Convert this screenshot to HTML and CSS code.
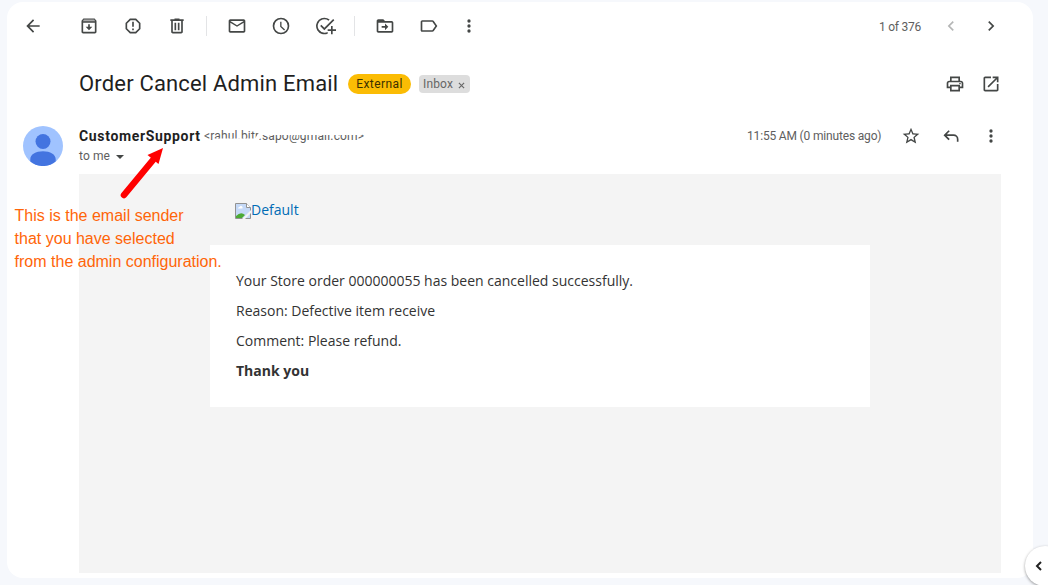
FILE: index.html
```html
<!DOCTYPE html>
<html lang="en">
<head>
<meta charset="utf-8">
<title>Order Cancel Admin Email</title>
<link rel="stylesheet" href="styles.css">
</head>
<body>
<main class="panel">
  <header class="toolbar">
    <svg class="icon back" viewBox="0 0 24 24"><path d="M20 11H7.8l5.6-5.6L12 4l-8 8 8 8 1.4-1.4L7.8 13H20z"/></svg>
    <svg class="icon" viewBox="0 0 24 24"><path d="M18.700 3H5.300L3 5.700V19c0 1.100.9 2 2 2h14c1.100 0 2-.9 2-2V5.700zM19 19H5V8h14z"/><path fill="#aaa" d="M5.800 4.300h12.400l1.100 1.900H4.700z"/><path d="M11 10h2v3h3l-4 4-4-4h3z"/></svg>
    <svg class="icon" viewBox="0 0 24 24"><path d="M15.700 3H8.300L3 8.300v7.400L8.300 21h7.400l5.300-5.300V8.300zM19 14.900 14.900 19H9.100L5 14.900V9.100L9.100 5h5.800L19 9.100zM11 7h2v6h-2zM11 15h2v2h-2z"/></svg>
    <svg class="icon" viewBox="0 0 24 24"><path d="M15 4V3H9v1H4v2h1v13c0 1.100.9 2 2 2h10c1.100 0 2-.9 2-2V6h1V4zm2 15H7V6h10zM9 8h2v9H9zm4 0h2v9h-2z"/></svg>
    <span class="rule"></span>
    <svg class="icon" viewBox="0 0 24 24"><path d="M20 4H4c-1.100 0-2 .9-2 2v12c0 1.100.9 2 2 2h16c1.100 0 2-.9 2-2V6c0-1.100-.9-2-2-2zm0 2-8 5-8-5zm0 12H4V8l8 5 8-5z"/></svg>
    <svg class="icon" viewBox="0 0 24 24"><path d="M12 2a10 10 0 1 0 0 20 10 10 0 0 0 0-20zm0 18a8 8 0 1 1 0-16 8 8 0 0 1 0 16zM12.600 7H11v6l4.700 4.400 1.200-1.300-4.300-3.900z"/></svg>
    <svg class="icon task" viewBox="0 0 24 24"><path d="M10 20a8 8 0 1 1 5-14.300l1.400-1.400A10 10 0 1 0 14 21.200v-2.100A8 8 0 0 1 10 20z"/><path d="M20.600 3.600 10 14.200l-3.600-3.600L5 12l5 5L22 5zM18 12h2v4h4v2h-4v4h-2v-4h-4v-2h4z"/></svg>
    <span class="rule"></span>
    <svg class="icon" viewBox="0 0 24 24"><path d="M20 6h-8l-2-2H4c-1.100 0-2 .9-2 2v12c0 1.100.9 2 2 2h16c1.100 0 2-.9 2-2V8c0-1.100-.9-2-2-2zm0 12H4V8h16zM12 9l4 4-4 4v-3H8v-2h4z"/></svg>
    <svg class="icon" viewBox="0 0 24 24"><path d="M16 5H4c-1.100 0-2 .9-2 2v10c0 1.100.9 2 2 2h12c.8 0 1.400-.4 1.800-1l4.200-6-4.200-6c-.4-.6-1-1-1.800-1zm0 12H4V7h12l3.600 5z"/></svg>
    <svg class="icon more" viewBox="0 0 24 24"><circle cx="12" cy="6" r="2"/><circle cx="12" cy="12" r="2"/><circle cx="12" cy="18" r="2"/></svg>
    <span class="count">1 of 376</span>
    <svg class="icon prev" viewBox="0 0 24 24"><path d="M15.400 7.400 14 6l-6 6 6 6 1.400-1.400-4.600-4.600z"/></svg>
    <svg class="icon next" viewBox="0 0 24 24"><path d="M10 6 8.600 7.400l4.600 4.600-4.600 4.600L10 18l6-6z"/></svg>
  </header>

  <section class="subject">
    <h1>Order Cancel Admin Email</h1>
    <span class="external">External</span>
    <span class="inbox">Inbox
      <svg class="close" viewBox="0 0 8 8"><path d="M1 1l6 6M7 1 1 7"/></svg>
    </span>
    <svg class="icon print" viewBox="0 0 24 24"><path d="M19 8h-1V3H6v5H5c-1.700 0-3 1.300-3 3v6h4v4h12v-4h4v-6c0-1.700-1.300-3-3-3zM8 5h8v3H8zm8 14H8v-4h8zm4-4h-2v-2H6v2H4v-4c0-.6.4-1 1-1h14c.6 0 1 .4 1 1z"/><circle cx="18" cy="11.500" r="1"/></svg>
    <svg class="icon open" viewBox="0 0 24 24"><path d="M19 19H5V5h7V3H5c-1.100 0-2 .9-2 2v14c0 1.100.9 2 2 2h14c1.100 0 2-.9 2-2v-7h-2zM14 3v2h3.600l-9.800 9.800 1.400 1.400L19 6.400V10h2V3z"/></svg>
  </section>

  <section class="message">
    <svg class="avatar" viewBox="0 0 40 40"><circle cx="20" cy="20" r="20" fill="#a0c3ff"/><circle cx="20" cy="15.500" r="7.500" fill="#4374e0"/><path fill="#4374e0" d="M7.300 35.500v-2.200c0-5 5.500-8 12.700-8s12.700 3 12.700 8v2.200a20 20 0 0 1-25.400 0z"/></svg>
    <div class="sender">
      <div class="from">
        <strong>CustomerSupport</strong>
        <span class="address">&lt;rahul.bitr.sapo@gmail.com&gt;
          <svg class="smudge" viewBox="0 0 164 18"><path d="M9 14H55" stroke-width="7"/><path d="M57 4.500H158" stroke-width="5"/><path d="M51 14 57 5M136 14h16" stroke-width="4"/></svg>
        </span>
      </div>
      <div class="to">to me <span class="caret"></span></div>
    </div>
    <span class="time">11:55 AM (0 minutes ago)</span>
    <svg class="icon star" viewBox="0 0 24 24"><path d="m22 9.200-7.200-.6L12 2 9.200 8.600 2 9.200l5.500 4.700L5.800 21l6.200-3.700 6.200 3.700-1.600-7.100zM12 15.400l-3.800 2.300 1-4.300-3.300-2.900 4.400-.4L12 6.100l1.700 4 4.400.4-3.300 2.900 1 4.300z"/></svg>
    <svg class="icon reply" viewBox="0 0 24 24"><path d="M18 19v-3a4 4 0 0 0-4-4H5.900l3.600 3.600L8 17l-6-6 6-6 1.500 1.400L5.900 10H14a6 6 0 0 1 6 6v3z" transform="translate(1 0)"/></svg>
    <svg class="icon dots" viewBox="0 0 24 24"><circle cx="12" cy="6" r="2"/><circle cx="12" cy="12" r="2"/><circle cx="12" cy="18" r="2"/></svg>
  </section>

  <section class="mail">
    <div class="logo">
      <svg class="broken" viewBox="0 0 16 16"><path d="M.5.500h11l4 4v11H.5z" fill="#c5d9f7" stroke="#929292"/><path d="M3 5.500q0-1.500 1.500-1.500Q5 2.500 6.500 3q1.500.5 1 2.500z" fill="#fff"/><path d="M1 15v-2q5-5 9-1l-3 3z" fill="#4caa35"/><path d="M11.500.5v4h4" fill="#fff" stroke="#929292"/><path d="M7 16h3l6-6V7z" fill="#f4f4f4"/></svg><span>Default</span>
    </div>
    <article class="content">
      <p>Your Store order 000000055 has been cancelled successfully.</p>
      <p>Reason: Defective item receive</p>
      <p>Comment: Please refund.</p>
      <p class="thanks">Thank you</p>
    </article>
  </section>
</main>
<div class="note">This is the email sender<br>that you have selected<br>from the admin configuration.</div>
<svg class="arrow" viewBox="0 0 50 56"><path d="M5 49 34 14" stroke="#f00" stroke-width="6.500" stroke-linecap="round"/><path d="m44 2-4.500 16L28.500 9z" fill="#f00"/></svg>
<div class="side-toggle"><svg viewBox="0 0 8 10"><path d="M6 1 2 5l4 4"/></svg></div>
</body>
</html>
```

FILE: styles.css
```css
* { box-sizing: border-box; }
body { margin: 0; height: 585px; overflow: hidden; position: relative; padding: 2px 15px 7px 7px; background: #f6f8fc; font-family: Roboto, sans-serif; color: #5e5e5e; }
.panel { height: 576px; background: #fff; border-radius: 16px; overflow: hidden; }
.icon { width: 20px; height: 20px; flex: none; fill: #444746; display: block; }
.toolbar { height: 48px; padding-left: 16px; display: flex; align-items: center; }
.toolbar .icon { margin-right: 24px; }
.toolbar .back { margin-right: 36px; }
.toolbar .task { margin-left: 1px; margin-right: 23px; }
.rule { width: 1px; height: 20px; background: #e3e4e6; margin: 0 20px 0 -5px; }
.toolbar .more { margin: 0 0 0 -4px; }
.count { width: 42px; margin-left: 400px; padding-top: 2px; font-size: 12px; white-space: nowrap; letter-spacing: -.25px; }
.toolbar .prev { margin: 0 20px; fill: #b5b6b6; }
.toolbar .next { margin: 0; }
.subject { height: 68px; padding-left: 72px; display: flex; align-items: center; }
h1 { width: 259px; margin: 0 10px 0 0; font-size: 22px; line-height: 28px; font-weight: 400; color: #1f1f1f; white-space: nowrap; letter-spacing: .17px; }
.external { width: 63px; height: 20px; margin-right: 8px; border-radius: 10px; background: #fbbc04; color: #3c3000; font-size: 12px; line-height: 20px; text-align: center; letter-spacing: .4px; }
.inbox { width: 51px; height: 18px; border-radius: 4px; background: #ddd; color: #666; font-size: 12px; line-height: 18px; padding-left: 4px; display: flex; align-items: center; gap: 5px; letter-spacing: .15px; }
.close { width: 7px; height: 7px; margin-top: 3px; stroke: #666; stroke-width: 1.300; fill: none; }
.print { margin-left: 475px; }
.open { margin-left: 16px; }
.message { height: 56px; padding: 6px 0 0 16px; display: flex; align-items: flex-start; }
.avatar { width: 40px; height: 40px; margin-right: 16px; flex: none; }
.message .avatar { margin-top: 2px; }
.sender { width: 668px; }
.from { height: 23px; display: flex; align-items: center; white-space: nowrap; }
.from strong { width: 121px; margin-right: 4px; font-size: 14px; color: #1f1f1f; letter-spacing: .66px; }
.address { position: relative; width: 160px; font-size: 12px; letter-spacing: .17px; }
.smudge { position: absolute; left: 0; top: -1px; width: 164px; height: 18px; fill: none; stroke: #fff; }
.to { height: 18px; display: flex; align-items: center; font-size: 12px; letter-spacing: .1px; }
.caret { border: 4px solid transparent; border-top-color: #444746; border-bottom: 0; margin: 1px 0 0 6px; }
.time { width: 134px; height: 23px; line-height: 25px; font-size: 12px; white-space: nowrap; letter-spacing: -.17px; }
.message .icon { margin-top: 2px; }
.star { margin-left: 20px; }
.reply, .dots { margin-left: 20px; }
.mail { width: 922px; height: 399px; margin-left: 72px; background: #f4f4f4; padding-left: 131px; font-family: "Open Sans", sans-serif; font-size: 14px; }
.logo { height: 71px; padding: 0 0 0 25px; display: flex; align-items: center; color: #006bb4; }
.broken { width: 16px; height: 16px; margin-top: 3px; }
.content { width: 660px; height: 162px; padding: 26px; background: #fff; color: #333; }
.content p { height: 20px; line-height: 20px; margin: 0 0 10px; white-space: nowrap; }
.content .thanks { font-weight: 700; }
.note { position: absolute; left: 14.600px; top: 204px; font: 16px/23px "Liberation Sans", Arial, sans-serif; color: #ff6508; white-space: nowrap; }
.arrow { position: absolute; left: 119px; top: 146px; width: 50px; height: 56px; fill: none; }
.side-toggle { position: absolute; left: 1025px; top: 546px; width: 40px; height: 40px; border-radius: 50%; background: #fff; box-shadow: 0 1px 3px #0006; }
.side-toggle svg { display: block; width: 8px; height: 10px; margin: 15px 0 0 10px; fill: none; stroke: #222; stroke-width: 2; }
```
